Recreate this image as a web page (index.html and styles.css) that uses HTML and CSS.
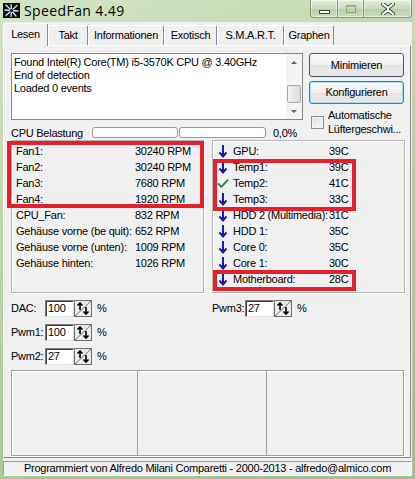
FILE: index.html
```html
<!DOCTYPE html>
<html>
<head>
<meta charset="utf-8">
<link rel="stylesheet" href="styles.css">
</head>
<body>
<div class="window">
  <div class="titlebar">
    <svg class="appicon" width="17" height="15" viewBox="0 0 17 15">
      <rect x="0" y="0" width="17" height="15" fill="#0c0c14"/>
      <g stroke="#dfe8f5" stroke-width="1.3" stroke-linecap="round">
        <line x1="8.5" y1="7.5" x2="3" y2="2"/>
        <line x1="8.5" y1="7.5" x2="8" y2="1.5"/>
        <line x1="8.5" y1="7.5" x2="14" y2="2.5"/>
        <line x1="8.5" y1="7.5" x2="15" y2="8"/>
        <line x1="8.5" y1="7.5" x2="13" y2="13"/>
        <line x1="8.5" y1="7.5" x2="8" y2="13.5"/>
        <line x1="8.5" y1="7.5" x2="3" y2="12.5"/>
        <line x1="8.5" y1="7.5" x2="2" y2="7"/>
      </g>
      <circle cx="8.5" cy="7.5" r="1.6" fill="#0c0c14"/>
    </svg>
    <span class="title">SpeedFan 4.49</span>
    <div class="caption">
      <div class="cbtn cmin"><span class="minbar"></span></div>
      <div class="cbtn cmax"><span class="maxbox"></span></div>
      <div class="cbtn cclose">
        <svg width="14" height="12" viewBox="0 0 14 12">
          <path d="M2 1 L7 5 L12 1 M2 11 L7 7 L12 11" fill="none" stroke="#3c4a3c" stroke-width="4" stroke-linecap="square"/>
          <path d="M2 1 L7 5 L12 1 M2 11 L7 7 L12 11 M7 5 L7 7" fill="none" stroke="#ffffff" stroke-width="2" stroke-linecap="square"/>
        </svg>
      </div>
    </div>
  </div>

  <div class="client">
    <div class="tabs">
      <div class="tab active w-lesen">Lesen</div>
      <div class="tab w-takt">Takt</div>
      <div class="tab w-info">Informationen</div>
      <div class="tab w-exo">Exotisch</div>
      <div class="tab w-smart">S.M.A.R.T.</div>
      <div class="tab w-graph">Graphen</div>
    </div>

    <div class="panel">
      <div class="top">
        <div class="leftcol">
          <div class="log">
            <div class="logtext">
              <div>Found Intel(R) Core(TM) i5-3570K CPU @ 3.40GHz</div>
              <div>End of detection</div>
              <div>Loaded 0 events</div>
            </div>
            <div class="scrollbar">
              <div class="sb-btn"><span class="tri-up"></span></div>
              <div class="sb-track"></div>
              <div class="sb-thumb"></div>
              <div class="sb-btn"><span class="tri-down"></span></div>
            </div>
          </div>
          <div class="cpu">
            <span class="cpu-label">CPU Belastung</span>
            <div class="bar bar1"></div>
            <div class="bar bar2"></div>
            <span class="cpu-val">0,0%</span>
          </div>
        </div>
        <div class="rightcol">
          <div class="btn">Minimieren</div>
          <div class="btn default">Konfigurieren</div>
          <div class="check">
            <span class="checkbox"></span>
            <span class="check-text">Automatische<br>Lüftergeschwi...</span>
          </div>
        </div>
      </div>

      <div class="groups">
        <div class="group fans">
          <div class="frow"><span class="flabel">Fan1:</span><span>30240 RPM</span></div>
          <div class="frow"><span class="flabel">Fan2:</span><span>30240 RPM</span></div>
          <div class="frow"><span class="flabel">Fan3:</span><span>7680 RPM</span></div>
          <div class="frow"><span class="flabel">Fan4:</span><span>1920 RPM</span></div>
          <div class="frow"><span class="flabel">CPU_Fan:</span><span>832 RPM</span></div>
          <div class="frow"><span class="flabel">Gehäuse vorne (be quit):</span><span>652 RPM</span></div>
          <div class="frow"><span class="flabel">Gehäuse vorne (unten):</span><span>1009 RPM</span></div>
          <div class="frow"><span class="flabel">Gehäuse hinten:</span><span>1026 RPM</span></div>
          <div class="hl hl-fans"></div>
        </div>
        <div class="group temps">
          <div class="trow"><svg class="ico" viewBox="0 0 12 14"><path d="M6 1 V12 M2.5 8.5 L6 12.5 L9.5 8.5" fill="none" stroke="#1a1aa8" stroke-width="2"/></svg><span class="tlabel">GPU:</span><span>39C</span></div>
          <div class="trow"><svg class="ico" viewBox="0 0 12 14"><path d="M6 1 V12 M2.5 8.5 L6 12.5 L9.5 8.5" fill="none" stroke="#1a1aa8" stroke-width="2"/></svg><span class="tlabel">Temp1:</span><span>39C</span></div>
          <div class="trow"><svg class="ico" viewBox="0 0 14 14"><path d="M1 7.5 L5 11.5 L13 3" fill="none" stroke="#2f8a3a" stroke-width="2.2"/></svg><span class="tlabel">Temp2:</span><span>41C</span></div>
          <div class="trow"><svg class="ico" viewBox="0 0 12 14"><path d="M6 1 V12 M2.5 8.5 L6 12.5 L9.5 8.5" fill="none" stroke="#1a1aa8" stroke-width="2"/></svg><span class="tlabel">Temp3:</span><span>33C</span></div>
          <div class="trow"><svg class="ico" viewBox="0 0 12 14"><path d="M6 1 V12 M2.5 8.5 L6 12.5 L9.5 8.5" fill="none" stroke="#1a1aa8" stroke-width="2"/></svg><span class="tlabel">HDD 2 (Multimedia):</span><span>31C</span></div>
          <div class="trow"><svg class="ico" viewBox="0 0 12 14"><path d="M6 1 V12 M2.5 8.5 L6 12.5 L9.5 8.5" fill="none" stroke="#1a1aa8" stroke-width="2"/></svg><span class="tlabel">HDD 1:</span><span>35C</span></div>
          <div class="trow"><svg class="ico" viewBox="0 0 12 14"><path d="M6 1 V12 M2.5 8.5 L6 12.5 L9.5 8.5" fill="none" stroke="#1a1aa8" stroke-width="2"/></svg><span class="tlabel">Core 0:</span><span>35C</span></div>
          <div class="trow"><svg class="ico" viewBox="0 0 12 14"><path d="M6 1 V12 M2.5 8.5 L6 12.5 L9.5 8.5" fill="none" stroke="#1a1aa8" stroke-width="2"/></svg><span class="tlabel">Core 1:</span><span>30C</span></div>
          <div class="trow"><svg class="ico" viewBox="0 0 12 14"><path d="M6 1 V12 M2.5 8.5 L6 12.5 L9.5 8.5" fill="none" stroke="#1a1aa8" stroke-width="2"/></svg><span class="tlabel">Motherboard:</span><span>28C</span></div>
          <div class="hl hl-temps"></div>
          <div class="hl hl-mb"></div>
        </div>
      </div>

      <div class="controls">
        <div class="ctlcol">
          <div class="ctl"><span class="clabel">DAC:</span><span class="input">100</span><svg class="spin" viewBox="0 0 18 17"><rect x="0.5" y="0.5" width="17" height="16" fill="#ececec" stroke="#6d6d6d"/><path d="M1 16 L17 1" stroke="#6d6d6d" stroke-width="1"/><path d="M6 3 V10 M3.5 5.5 L6 3 L8.5 5.5" fill="none" stroke="#000" stroke-width="1.6"/><path d="M12 7 V14 M9.5 11.5 L12 14 L14.5 11.5" fill="none" stroke="#000" stroke-width="1.6"/></svg><span class="pct">%</span></div>
          <div class="ctl"><span class="clabel">Pwm1:</span><span class="input">100</span><svg class="spin" viewBox="0 0 18 17"><rect x="0.5" y="0.5" width="17" height="16" fill="#ececec" stroke="#6d6d6d"/><path d="M1 16 L17 1" stroke="#6d6d6d" stroke-width="1"/><path d="M6 3 V10 M3.5 5.5 L6 3 L8.5 5.5" fill="none" stroke="#000" stroke-width="1.6"/><path d="M12 7 V14 M9.5 11.5 L12 14 L14.5 11.5" fill="none" stroke="#000" stroke-width="1.6"/></svg><span class="pct">%</span></div>
          <div class="ctl"><span class="clabel">Pwm2:</span><span class="input">27</span><svg class="spin" viewBox="0 0 18 17"><rect x="0.5" y="0.5" width="17" height="16" fill="#ececec" stroke="#6d6d6d"/><path d="M1 16 L17 1" stroke="#6d6d6d" stroke-width="1"/><path d="M6 3 V10 M3.5 5.5 L6 3 L8.5 5.5" fill="none" stroke="#000" stroke-width="1.6"/><path d="M12 7 V14 M9.5 11.5 L12 14 L14.5 11.5" fill="none" stroke="#000" stroke-width="1.6"/></svg><span class="pct">%</span></div>
        </div>
        <div class="ctlcol">
          <div class="ctl"><span class="clabel">Pwm3:</span><span class="input">27</span><svg class="spin" viewBox="0 0 18 17"><rect x="0.5" y="0.5" width="17" height="16" fill="#ececec" stroke="#6d6d6d"/><path d="M1 16 L17 1" stroke="#6d6d6d" stroke-width="1"/><path d="M6 3 V10 M3.5 5.5 L6 3 L8.5 5.5" fill="none" stroke="#000" stroke-width="1.6"/><path d="M12 7 V14 M9.5 11.5 L12 14 L14.5 11.5" fill="none" stroke="#000" stroke-width="1.6"/></svg><span class="pct">%</span></div>
        </div>
      </div>

      <div class="chart">
        <div class="cell c1"></div>
        <div class="cell c2"></div>
        <div class="cell c3"></div>
      </div>
    </div>

    <div class="status">Programmiert von Alfredo Milani Comparetti - 2000-2013 - alfredo@almico.com</div>
  </div>
</div>
</body>
</html>
```

FILE: styles.css
```css
html, body {
  margin: 0;
  padding: 0;
  background: #a9c196;
}
body {
  font-family: "Liberation Sans", Arial, sans-serif;
  font-size: 11px;
  letter-spacing: -0.25px;
  color: #000;
}
.window {
  width: 415px;
  height: 479px;
  display: flex;
  flex-direction: column;
  background: linear-gradient(160deg, #d3e4c5 0%, #bfd6ab 35%, #afc99a 70%, #a3bd90 100%);
  overflow: hidden;
}
.titlebar {
  height: 22px;
  display: flex;
  align-items: flex-start;
  flex-shrink: 0;
}
.appicon {
  margin: 3px 0 0 3px;
  display: block;
}
.title {
  font-family: "Open Sans", "Noto Sans", sans-serif;
  font-size: 14px;
  letter-spacing: 0.4px;
  line-height: 22px;
  margin-left: 4px;
  color: #000;
}
.caption {
  margin-left: auto;
  margin-right: 3px;
  display: flex;
  height: 18px;
}
.cbtn {
  height: 17px;
  border: 1px solid rgba(60, 80, 60, 0.55);
  border-top: none;
  background: linear-gradient(#e4eedc, #c9dbbb 50%, #b9cfa8 51%, #cbdcbe);
  box-shadow: inset 0 0 0 1px rgba(255, 255, 255, 0.55);
  display: flex;
  align-items: center;
  justify-content: center;
}
.cmin {
  width: 26px;
  border-radius: 0 0 0 4px;
}
.cmax {
  width: 25px;
  border-left: none;
}
.cclose {
  width: 47px;
  border-left: none;
  border-radius: 0 0 4px 0;
}
.minbar {
  display: block;
  width: 9px;
  height: 2px;
  margin-top: 6px;
  background: #fff;
  border: 1px solid #3c4a3c;
}
.maxbox {
  display: block;
  width: 8px;
  height: 6px;
  border: 1px solid rgba(80, 100, 80, 0.45);
  box-shadow: inset 0 1px 0 rgba(80, 100, 80, 0.35);
}

.client {
  flex: 1;
  margin: 0 3px 3px 3px;
  background: #f0f0f0;
  display: flex;
  flex-direction: column;
}

.tabs {
  margin-top: 1px;
  height: 22px;
  display: flex;
  align-items: flex-end;
  position: relative;
  z-index: 2;
}
.tab {
  box-sizing: border-box;
  height: 20px;
  line-height: 18px;
  text-align: center;
  border-top: 1px solid #fff;
  border-left: 1px solid #fff;
  border-right: 1px solid #8a8a8a;
  border-radius: 2px 2px 0 0;
  background: #f0f0f0;
  white-space: nowrap;
}
.tab.active {
  height: 23px;
  line-height: 21px;
  margin-bottom: -1px;
  border-bottom: none;
}
.w-lesen { width: 45px; }
.w-takt { width: 40px; }
.w-info { width: 76px; }
.w-exo { width: 53px; }
.w-smart { width: 67px; }
.w-graph { width: 50px; }

.panel {
  box-sizing: border-box;
  height: 413px;
  width: 408px;
  border-top: 1px solid #fff;
  border-left: 1px solid #fff;
  border-right: 1px solid #8a8a8a;
  border-bottom: 1px solid #8a8a8a;
  padding: 7px 0 0 7px;
  display: flex;
  flex-direction: column;
}

.top {
  display: flex;
  gap: 6px;
}
.leftcol {
  width: 292px;
  display: flex;
  flex-direction: column;
}
.log {
  box-sizing: border-box;
  height: 67px;
  background: #fff;
  border: 1px solid #828790;
  display: flex;
}
.logtext {
  flex: 1;
  padding: 2px 0 0 2px;
  line-height: 13px;
  white-space: nowrap;
  overflow: hidden;
}
.scrollbar {
  width: 16px;
  display: flex;
  flex-direction: column;
  background: #f4f4f4;
}
.sb-btn {
  height: 16px;
  display: flex;
  align-items: center;
  justify-content: center;
}
.sb-track {
  flex: 1;
}
.sb-thumb {
  height: 16px;
  margin: 0 1px;
  border: 1px solid #a8a8a8;
  border-radius: 2px;
  background: linear-gradient(90deg, #f2f2f2, #dcdcdc);
}
.tri-up {
  width: 0;
  height: 0;
  border-left: 3px solid transparent;
  border-right: 3px solid transparent;
  border-bottom: 3px solid #606060;
}
.tri-down {
  width: 0;
  height: 0;
  border-left: 3px solid transparent;
  border-right: 3px solid transparent;
  border-top: 3px solid #606060;
}
.cpu {
  margin-top: 7px;
  height: 11px;
  display: flex;
  align-items: center;
}
.cpu-label {
  width: 81px;
  white-space: nowrap;
}
.bar {
  box-sizing: border-box;
  height: 11px;
  background: #fff;
  border: 1px solid #9a9a9a;
  border-radius: 3px;
}
.bar1 { width: 86px; }
.bar2 { width: 87px; margin-left: 1px; }
.cpu-val { margin-left: 7px; }

.rightcol {
  width: 95px;
  display: flex;
  flex-direction: column;
}
.btn {
  box-sizing: border-box;
  height: 24px;
  line-height: 22px;
  text-align: center;
  border: 1px solid #4a5670;
  border-radius: 3px;
  background: linear-gradient(#fafafa, #efefef 50%, #e3e3e3 51%, #e9e9e9);
}
.btn + .btn {
  margin-top: 4px;
  height: 23px;
  line-height: 21px;
}
.btn.default {
  border-color: #3c7fb1;
  box-shadow: inset 0 0 0 1px #a7d8f4;
}
.check {
  display: flex;
  align-items: center;
  margin-top: 4px;
}
.checkbox {
  box-sizing: border-box;
  width: 13px;
  height: 13px;
  margin-left: 2px;
  border: 1px solid #8e8f8f;
  background: linear-gradient(135deg, #dcdcdc, #fafafa);
  box-shadow: inset 0 0 0 1px #f4f4f4;
}
.check-text {
  margin-left: 4px;
  line-height: 14px;
  white-space: nowrap;
}

.groups {
  margin-top: 2px;
  display: flex;
  gap: 8px;
}
.group {
  position: relative;
  box-sizing: border-box;
  width: 193px;
  height: 153px;
  border: 1px solid #b4b4b4;
  box-shadow: inset 1px 1px 0 #fff, 1px 1px 0 #fff;
  padding-top: 2px;
}
.frow {
  height: 16px;
  line-height: 16px;
  display: flex;
  padding-left: 4px;
  white-space: nowrap;
}
.flabel {
  width: 119px;
}
.trow {
  height: 16px;
  line-height: 16px;
  display: flex;
  align-items: center;
  padding-left: 4px;
  white-space: nowrap;
}
.ico {
  width: 12px;
  height: 14px;
  margin-right: 4px;
}
.tlabel {
  width: 96px;
}
.hl {
  position: absolute;
  box-sizing: border-box;
  border: 4px solid #e3202b;
}
.hl-fans {
  left: -5px;
  top: 0px;
  width: 197px;
  height: 67px;
}
.hl-temps {
  left: 0px;
  top: 18px;
  width: 143px;
  height: 52px;
}
.hl-mb {
  left: 0px;
  top: 129px;
  width: 143px;
  height: 21px;
}

.controls {
  margin-top: 7px;
  display: flex;
}
.ctlcol {
  display: flex;
  flex-direction: column;
  gap: 8px;
}
.ctlcol:first-child {
  width: 201px;
}
.ctl {
  height: 16px;
  display: flex;
  align-items: center;
}
.clabel {
  width: 34px;
}
.ctlcol + .ctlcol .clabel {
  width: 33px;
}
.input {
  box-sizing: border-box;
  width: 29px;
  height: 17px;
  line-height: 15px;
  padding-left: 2px;
  background: #fff;
  border: 1px solid #7a7a7a;
  border-right-color: #e0e0e0;
  border-bottom-color: #e0e0e0;
  box-shadow: inset 1px 1px 0 #404040;
}
.spin {
  width: 18px;
  height: 17px;
  display: block;
}
.pct {
  margin-left: 5px;
}

.chart {
  margin-top: 6px;
  box-sizing: border-box;
  width: 393px;
  height: 86px;
  border: 1px solid #a0a0a0;
  box-shadow: inset 1px 1px 0 #fff, 1px 1px 0 #fff;
  display: flex;
}
.cell {
  height: 100%;
}
.c1 { width: 125px; border-right: 1px solid #a0a0a0; }
.c2 { width: 128px; border-right: 1px solid #a0a0a0; }
.c3 { flex: 1; }

.status {
  margin-top: 3px;
  box-sizing: border-box;
  width: 409px;
  height: 15px;
  line-height: 13px;
  border: 1px solid #a0a0a0;
  border-right-color: #fff;
  border-bottom-color: #fff;
  text-align: center;
  white-space: nowrap;
}
```
